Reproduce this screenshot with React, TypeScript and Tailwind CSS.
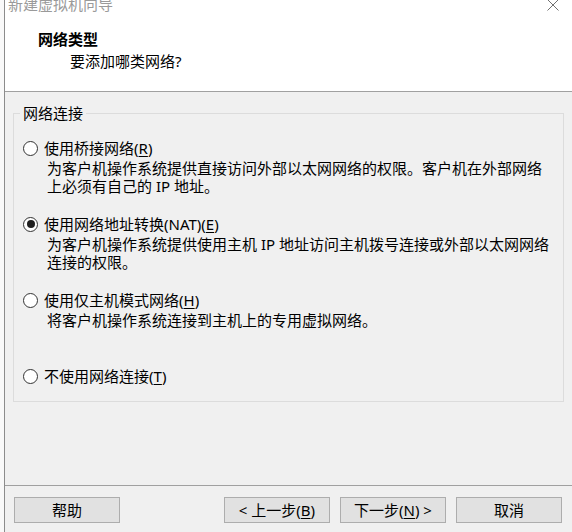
type OptionProps = {
  checked?: boolean;
  label: string;
  hotkey: string;
  lines?: string[];
  className?: string;
};

function Radio({ checked }: { checked?: boolean }) {
  return (
    <span className="ml-[1px] flex h-[15px] w-[15px] shrink-0 items-center justify-center rounded-full border border-[#333333] bg-white">
      {checked && <span className="h-[8px] w-[8px] rounded-full bg-[#1f1f1f]" />}
    </span>
  );
}

function Option({ checked, label, hotkey, lines = [], className = "" }: OptionProps) {
  return (
    <div className={className}>
      <div className="flex h-[20px] items-center gap-[6px] leading-[20px]">
        <Radio checked={checked} />
        <span className="whitespace-nowrap">
          {label}(<span className="underline underline-offset-2">{hotkey}</span>)
        </span>
      </div>
      {lines.length > 0 && (
        <div className="mt-[1px] pl-[25px] leading-[18px]">
          {lines.map((line) => (
            <div key={line} className="whitespace-nowrap">
              {line}
            </div>
          ))}
        </div>
      )}
    </div>
  );
}

function WizardButton({ children }: { children: React.ReactNode }) {
  return (
    <button
      type="button"
      className="flex h-[26px] w-[106px] shrink-0 items-center justify-center border border-[#adadad] bg-[#e1e1e1] leading-[20px] whitespace-nowrap"
    >
      {children}
    </button>
  );
}

export default function App() {
  return (
    <div className="flex h-[532px] w-[572px] overflow-hidden bg-[#f0f0f0] font-['Noto_Sans','Noto_Sans_CJK_SC',sans-serif] text-[15px] text-black">
      <div className="w-[4px] shrink-0 bg-[#f9f9f9]" />
      <div className="flex min-w-0 flex-1 flex-col border-l border-[#8c8c8c]">
        <header className="h-[92px] shrink-0 border-b border-[#a0a0a0] bg-white">
          <div className="flex h-[14px] items-start justify-between overflow-hidden pr-[13px]">
            <span className="-mt-[6px] pl-[3px] leading-[20px] text-[#9a9a9a]">新建虚拟机向导</span>
            <svg width="12" height="12" viewBox="0 0 12 12" className="-mt-[1px]">
              <path d="M0.5 0.5 L11.5 11.5 M11.5 0.5 L0.5 11.5" stroke="#707070" strokeWidth="1" fill="none" />
            </svg>
          </div>
          <div className="mt-[15px] pl-[33px] font-bold leading-[20px]">网络类型</div>
          <div className="mt-[2px] pl-[65px] leading-[20px]">要添加哪类网络?</div>
        </header>

        <main className="min-h-0 flex-1 px-[8px] pt-[11px]">
          <fieldset className="border border-[#dcdcdc] px-[8px] pb-[15px]">
            <legend className="-ml-[2px] px-[3px] leading-[20px]">网络连接</legend>
            <div className="mt-[15px]">
              <Option
                className="h-[76px]"
                label="使用桥接网络"
                hotkey="R"
                lines={[
                  "为客户机操作系统提供直接访问外部以太网网络的权限。客户机在外部网络",
                  "上必须有自己的 IP 地址。",
                ]}
              />
              <Option
                className="h-[76px]"
                checked
                label="使用网络地址转换(NAT)"
                hotkey="E"
                lines={[
                  "为客户机操作系统提供使用主机 IP 地址访问主机拨号连接或外部以太网网络",
                  "连接的权限。",
                ]}
              />
              <Option
                className="h-[76px]"
                label="使用仅主机模式网络"
                hotkey="H"
                lines={["将客户机操作系统连接到主机上的专用虚拟网络。"]}
              />
              <Option label="不使用网络连接" hotkey="T" />
            </div>
          </fieldset>
        </main>

        <footer className="flex h-[47px] shrink-0 items-start border-t border-[#a0a0a0] pl-[9px] pr-[10px] pt-[11px]">
          <WizardButton>帮助</WizardButton>
          <div className="flex-1" />
          <div className="flex gap-[10px]">
            <WizardButton>
              &lt; 上一步(<span className="underline underline-offset-2">B</span>)
            </WizardButton>
            <WizardButton>
              下一步(<span className="underline underline-offset-2">N</span>) &gt;
            </WizardButton>
            <WizardButton>取消</WizardButton>
          </div>
        </footer>
      </div>
    </div>
  );
}
